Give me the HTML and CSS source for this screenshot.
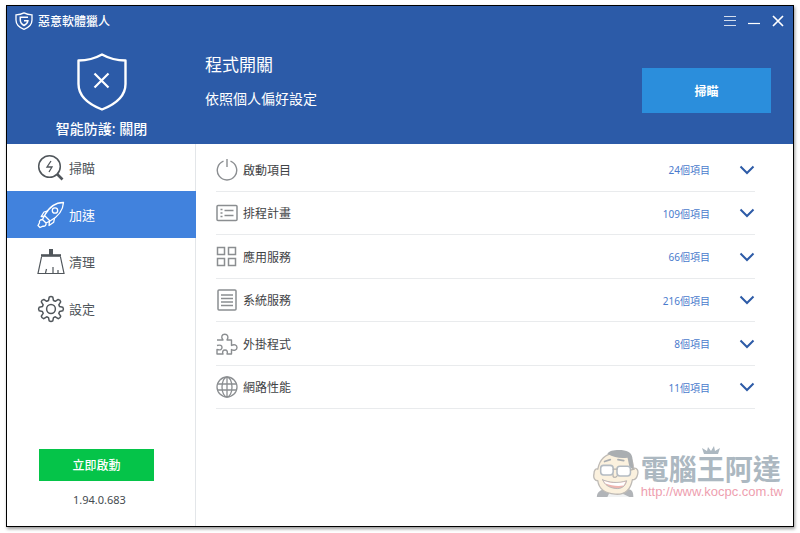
FILE: index.html
```html
<!DOCTYPE html>
<html lang="zh-Hant">
<head>
<meta charset="utf-8">
<title>惡意軟體獵人</title>
<link rel="stylesheet" href="styles.css">
</head>
<body>
<div class="window">
  <header class="header">
    <div class="titlebar">
      <svg class="logo" viewBox="0 0 18 18" fill="none" stroke="currentColor"><path d="M9 .9C6.500 2.300 3.500 2.800 1 2.800V8c0 4.500 3.500 7.600 8 9.300 4.500-1.700 8-4.800 8-9.300V2.800C14.500 2.800 11.500 2.300 9 .9z" stroke-width="1.300"/><path d="M13 5.200H5.300V8c0 2.500 1.500 4.300 3.700 5.500 2.300-1.200 3.700-2.500 3.900-4.700H9" stroke-width="1.500"/></svg>
      <h1 class="app-name">惡意軟體獵人</h1>
      <div class="controls">
        <button class="control" aria-label="選單"><svg viewBox="0 0 12 12" stroke="currentColor"><path d="M0 1.500h12M0 5.500h12M0 10.500h12" opacity=".8"/></svg></button>
        <button class="control" aria-label="最小化"><svg viewBox="0 0 12 12" stroke="currentColor"><path d="M0 8.500h12" stroke-width="1.200"/></svg></button>
        <button class="control" aria-label="關閉"><svg viewBox="0 0 12 12" stroke="currentColor"><path d="M1 1l10 10M11 1L1 11" stroke-width="1.700"/></svg></button>
      </div>
    </div>
    <div class="hero">
      <div class="status">
        <svg class="shield" viewBox="0 0 50 58" fill="none" stroke="currentColor" stroke-width="2.400" stroke-linejoin="round"><path d="M25 1.500C17 6 9 7.500 1.500 7.500V31c0 13 12 21 23.500 25.500C36.500 52 48.500 44 48.500 31V7.500C41 7.500 33 6 25 1.500z"/><path d="M17.500 20.500l14 14M31.500 20.500l-14 14" stroke-width="2.200"/></svg>
        <p class="status-text">智能防護: 關閉</p>
      </div>
      <div class="intro">
        <h2 class="intro-title">程式開關</h2>
        <p class="intro-text">依照個人偏好設定</p>
      </div>
      <button class="scan">掃瞄</button>
    </div>
  </header>
  <div class="body">
    <aside class="sidebar">
      <nav class="nav">
        <a class="nav-item" href="#scan"><svg viewBox="0 0 28 28" fill="none" stroke="currentColor"><circle cx="12.500" cy="12.500" r="10.800" stroke-width="1.500"/><path d="M20 20l5.500 5.500" stroke-width="2.600"/><path d="M14 7l-4 6h5l-3 5" stroke-width="1.300"/></svg>掃瞄</a>
        <a class="nav-item active" href="#boost" aria-current="page"><svg viewBox="0 0 28 28" fill="none" stroke="currentColor" stroke-width="1.300" stroke-linejoin="round"><path d="M26.500 1.500C19 1.500 12 6 7.500 14.500l5.500 5.500C21.500 15.500 26 9 26.500 1.500z"/><circle cx="18" cy="9.500" r="2.700"/><path d="M11 9.800l-4 1.200-2.800 4.500 3.800-.3M17.500 17.200l-.8 4-4.700 3.300.5-4.300M7.500 14.500l-2 4 3.500 3.500 4-2M5.500 18.500c-2 0-3.500 1.200-3 3.200L1 24.500l2 2 3-1.300c2 .3 3.500-1 3-3.200"/></svg>加速</a>
        <a class="nav-item" href="#clean"><svg viewBox="0 0 28 28" fill="none" stroke="currentColor"><path d="M14 1v6" stroke-width="4"/><path d="M4 7.500h20" stroke-width="2.600"/><path d="M4.500 9L1 25.500h26L23.500 9" stroke-width="1.200"/><path d="M9.500 21l-1 4M16 19v6M21 22v3" stroke-width="1.200"/></svg>清理</a>
        <a class="nav-item" href="#settings"><svg viewBox="0 0 28 28" fill="none" stroke="currentColor" stroke-width="1.500" stroke-linejoin="round"><circle cx="14" cy="14" r="4.400"/><path d="M11.500 5.500l.7-3.300q1.800-1.200 3.600 0l.7 3.300 1.800.8 2.900-1.900q2.200.4 2.500 2.500l-1.900 2.900.8 1.800 3.200.6q1.200 1.800 0 3.600l-3.200.7-.8 1.800 1.900 2.900q-.3 2.100-2.500 2.500l-2.900-1.900-1.800.8-.7 3.200q-1.800 1.200-3.600 0l-.7-3.200-1.800-.8-2.900 1.900q-2.200-.4-2.500-2.500l1.900-2.900-.8-1.800-3.200-.7q-1.200-1.800 0-3.600l3.200-.6.8-1.800-1.900-2.900q.3-2.100 2.500-2.500l2.900 1.900z"/></svg>設定</a>
      </nav>
      <div class="side-footer">
        <button class="activate">立即啟動</button>
        <p class="version">1.94.0.683</p>
      </div>
    </aside>
    <main class="content">
      <ul class="list">
        <li class="row"><svg class="row-icon" viewBox="0 0 22 22" fill="none" stroke="currentColor" stroke-width="1.400"><path d="M7.500 2.200a9.700 9.700 0 1 0 7 0M11 0v8"/></svg><span class="row-name">啟動項目</span><span class="count">24個項目</span><button class="expand" aria-label="展開啟動項目"><svg viewBox="0 0 16 10"><path d="M1.500 1.500L8 8l6.500-6.500"/></svg></button></li>
        <li class="row"><svg class="row-icon" viewBox="0 0 22 22" fill="none" stroke="currentColor" stroke-width="1.500"><rect x="1" y="3.500" width="20" height="15" rx="1"/><path d="M4.500 7.500h2M4.500 11h2M4.500 14.500h2M8.500 8.500h9M8.500 13.500h9"/></svg><span class="row-name">排程計畫</span><span class="count">109個項目</span><button class="expand" aria-label="展開排程計畫"><svg viewBox="0 0 16 10"><path d="M1.500 1.500L8 8l6.500-6.500"/></svg></button></li>
        <li class="row"><svg class="row-icon" viewBox="0 0 22 22" fill="none" stroke="currentColor" stroke-width="1.500"><path d="M1.500 1.500h7v7h-7zM12.500 1.500h7v7h-7zM1.500 12.500h7v7h-7zM12.500 12.500h7v7h-7z"/></svg><span class="row-name">應用服務</span><span class="count">66個項目</span><button class="expand" aria-label="展開應用服務"><svg viewBox="0 0 16 10"><path d="M1.500 1.500L8 8l6.500-6.500"/></svg></button></li>
        <li class="row"><svg class="row-icon" viewBox="0 0 22 22" fill="none" stroke="currentColor" stroke-width="1.500"><rect x="2" y="1" width="18" height="20" rx="1"/><path d="M5 6h12M5 9.500h12M5 13h12M5 16.500h12"/></svg><span class="row-name">系統服務</span><span class="count">216個項目</span><button class="expand" aria-label="展開系統服務"><svg viewBox="0 0 16 10"><path d="M1.500 1.500L8 8l6.500-6.500"/></svg></button></li>
        <li class="row"><svg class="row-icon" viewBox="0 0 22 22" fill="none" stroke="currentColor" stroke-width="1.400" stroke-linejoin="round"><path d="M1 7h6C4.500 4 6 1.200 8.800 1.200S13 4 11 7h4.500v5.500c2.500-1.700 5.500-.5 5.500 2s-3 3.700-5.500 2V21H11c1-2.500 0-4-2-4s-3 1.500-2 4H1v-4.500c3.500 1 5-.2 5-2s-1.500-3-5-2"/></svg><span class="row-name">外掛程式</span><span class="count">8個項目</span><button class="expand" aria-label="展開外掛程式"><svg viewBox="0 0 16 10"><path d="M1.500 1.500L8 8l6.500-6.500"/></svg></button></li>
        <li class="row"><svg class="row-icon" viewBox="0 0 22 22" fill="none" stroke="currentColor" stroke-width="1.300"><circle cx="11" cy="11" r="10"/><ellipse cx="11" cy="11" rx="5" ry="10"/><path d="M11 1v20M1.500 8h19M1.500 14h19"/></svg><span class="row-name">網路性能</span><span class="count">11個項目</span><button class="expand" aria-label="展開網路性能"><svg viewBox="0 0 16 10"><path d="M1.500 1.500L8 8l6.500-6.500"/></svg></button></li>
      </ul>
    </main>
  </div>
  <div class="watermark">
    <svg class="mascot" viewBox="0 0 50 52" fill="none" stroke-linecap="round" stroke-linejoin="round"><path d="M4 50c0-4 3-8 9-8h24c4 0 5 4 5 8z" fill="#a4a8ac"/><path d="M15 50l3-6 14 3 6 3z" fill="#eef0f1"/><path d="M6 17C9 8 16 4 26 4c11 0 16 6 16 16 4-1 6 3 4 8-1 3-2 4-5 4-2 10-8 16-18 15C12 46 6 41 5 33c-3 0-5-3-4-7 0-4 2-6 4-5z" fill="#fbefd9" stroke="#b5b0aa" stroke-width="1.400"/><path d="M15 5c2-3 6-4 12-4 8 0 13 2 14 8l1 12-4-2-2-10c-7 1-14 0-21-4z" fill="#9ca0a4"/><path d="M12 13l6-2M26 11l6 1" stroke="#9ca0a4" stroke-width="1.800"/><rect x="8" y="17" width="13" height="10" rx="3" fill="#fff" stroke="#a7b0b8" stroke-width="1.600"/><rect x="25" y="18" width="14" height="10" rx="3" fill="#fff" stroke="#a7b0b8" stroke-width="1.600"/><path d="M21 21h4M39 22l4-1M21 27c-1 3 3 3 4 1" stroke="#aaa7a2" stroke-width="1.300"/><path d="M10 32c7 3 16 4 25 1-1 6-6 9-12 8-7-1-11-4-13-9z" fill="#eca9a3" stroke="#aaa" stroke-width="1"/><path d="M11 33c7 3 15 3 23 1l-2 4c-7 1-13 0-19-2z" fill="#fff"/></svg>
    <div class="brand">
      <svg class="crown" viewBox="0 0 18 9"><path d="M2 8L0 2l5 3 1-4 3 4 3-5 1 5 5-3-2 6z" fill="#acb8c1"/></svg>
      <span class="brand-name">電腦王阿達</span>
      <span class="brand-url">http://www.kocpc.com.tw</span>
    </div>
  </div>
</div>
</body>
</html>
```
FILE: styles.css
```css
* { box-sizing: border-box; }

body {
  margin: 0;
  padding: 5px 6px 6px;
  height: 100vh;
  display: flex;
  background: #fff;
  color: #454b50;
  font-family: "Noto Sans", "Noto Sans CJK TC", sans-serif;
  font-size: 12px;
}

h1, h2, p, ul { margin: 0; padding: 0; font-weight: 400; }
button { border: 0; padding: 0; font: inherit; color: inherit; cursor: pointer; }
svg { display: block; flex: none; }

.window {
  position: relative;
  flex: 1;
  display: flex;
  flex-direction: column;
  border: 1px solid #000;
  box-shadow: 1px 2px 3px rgba(0, 0, 0, .4);
  background: #fff;
}

.header { background: #2c5ba8; color: #fff; }

.titlebar {
  display: flex;
  align-items: center;
  height: 30px;
  padding: 0 9px 0 8px;
}
.logo { width: 18px; height: 18px; }
.app-name { margin-left: 5px; font-size: 12px; font-weight: 500; }
.controls { display: flex; gap: 12px; margin-left: auto; }
.control { width: 12px; height: 12px; background: none; }

.hero { display: flex; align-items: flex-start; height: 108px; }
.status {
  display: flex;
  flex-direction: column;
  align-items: center;
  width: 189px;
  padding-top: 17px;
}
.shield { width: 50px; height: 58px; }
.status-text { margin-top: 8px; font-size: 14px; font-weight: 500; line-height: 20px; }
.intro { flex: 1; padding: 17px 0 0 9px; }
.intro-title { font-size: 17px; line-height: 24px; }
.intro-text { margin-top: 12px; font-size: 14px; line-height: 20px; }
.scan {
  width: 129px;
  height: 45px;
  margin: 32px 22px 0 0;
  background: #2b8edc;
  font-size: 12px;
  font-weight: 700;
}

.body { flex: 1; display: flex; }

.sidebar {
  display: flex;
  flex-direction: column;
  justify-content: space-between;
  width: 189px;
  border-right: 1px solid #e3e6e9;
}
.nav-item {
  display: flex;
  align-items: center;
  gap: 4px;
  height: 47px;
  padding-left: 30px;
  color: #50565b;
  font-size: 13px;
  text-decoration: none;
}
.nav-item svg { width: 28px; height: 28px; }
.nav-item.active { margin-right: -1px; background: #4182dd; color: #fff; }

.side-footer { padding: 0 0 18px 32px; }
.activate {
  display: block;
  width: 115px;
  height: 32px;
  background: #05c449;
  color: #fff;
  font-size: 12px;
  font-weight: 500;
}
.version { margin-top: 11px; padding-left: 34px; font-size: 11px; line-height: 16px; }

.content { flex: 1; padding: 4px 38px 0 20px; }
.list {
  display: flex;
  flex-direction: column;
  height: 261px;
  list-style: none;
}
.row {
  flex: 1;
  display: flex;
  align-items: center;
  padding-top: 1px;
  border-bottom: 1px solid #e9ebed;
}
.row-icon { width: 22px; height: 22px; color: #8b8e91; }
.row-name { margin-left: 5px; color: #3f4346; font-size: 12px; }
.count { margin-left: auto; color: #4a7bcd; font-size: 10px; }
.expand { width: 16px; height: 10px; margin-left: 29px; background: none; }
.expand path { fill: none; stroke: #2d5ba7; stroke-width: 2; }

.watermark {
  position: absolute;
  right: 10px;
  bottom: 27px;
  display: flex;
  align-items: flex-end;
}
.mascot { width: 48px; height: 50px; opacity: .85; }
.brand { position: relative; display: flex; flex-direction: column; }
.crown { position: absolute; left: 61px; top: -7px; width: 18px; height: 9px; }
.brand-name { color: #acb8c1; font-size: 28px; font-weight: 700; line-height: 32px; }
.brand-url {
  color: #eea0af;
  font-family: "Liberation Sans", sans-serif;
  font-size: 13px;
  line-height: 14px;
}
```
